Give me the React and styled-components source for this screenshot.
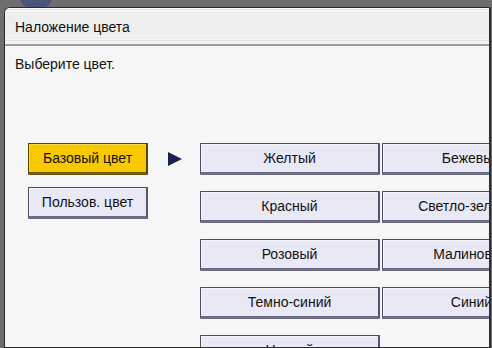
import React from 'react';
import styled, { createGlobalStyle } from 'styled-components';

const GlobalStyle = createGlobalStyle`
    html, body
    {
        margin: 0;
        padding: 0;
        background: #6b6b6b;
    }
    body
    {
        font-family: "Liberation Sans", Arial, sans-serif;
    }
`;

const Screen = styled.div
`   position: relative;
    width: 492px;
    height: 348px;
    overflow: hidden;
    background: #6d6d6d;
    display: flex;
    flex-direction: column;
    padding: 7px 0 0 4px;
    box-sizing: border-box;
`;

// the round dark-blue thing peeking out behind the panel
const Knob = styled.div
`   position: absolute;
    left: 18px;
    top: -26px;
    width: 36px;
    height: 36px;
    border-radius: 50%;
    background: #4a5478;
`;

const Panel = styled.section
`   position: relative;
    width: 487px;
    flex: 1;
    min-height: 0;
    display: flex;
    flex-direction: column;
    background: #f6f6f6;
    border: 1px solid #2a2a2a;
    border-right: 2px solid #2e2e2e;
    border-radius: 6px 0 0 0;
    overflow: hidden;
    box-sizing: border-box;
`;

const TitleBar = styled.header
`   flex: none;
    height: 38px;
    display: flex;
    align-items: center;
    padding: 2px 0 0 10px;
    box-sizing: border-box;
    font-size: 14px;
    color: #111;
    border-bottom: 2px solid #9c9c9c;
    background: linear-gradient(to bottom,
        #fbfbfb 0, #fbfbfb 1px,
        #e6e6e6 1px, #e6e6e6 2px,
        #f5f5f5 2px, #f5f5f5 4px,
        #e9e9e9 4px, #e9e9e9 5px,
        #eeeeee 5px, #eeeeee 28px,
        #f8f8f8 28px, #f8f8f8 29px,
        #e6e6e6 29px, #e6e6e6 30px,
        #f5f5f5 30px, #f5f5f5 32px,
        #e4e4e4 32px, #e4e4e4 33px,
        #f2f2f2 33px, #f2f2f2 36px);
`;

const Body = styled.div
`   flex: none;
    padding: 10px 0 0 10px;
    display: flex;
    flex-direction: column;
`;

const Hint = styled.p
`   margin: 0;
    font-size: 14px;
    line-height: 16px;
    color: #111;
`;

const Content = styled.div
`   display: flex;
    align-items: flex-start;
    margin-top: 71px;
    padding-left: 13px;
`;

const Modes = styled.div
`   display: flex;
    flex-direction: column;
    gap: 12px;
`;

const Button = styled.button
`   box-sizing: border-box;
    width: ${p => p.$w}px;
    height: 32px;
    flex: none;
    padding: 0 0 1px;
    font-family: "Liberation Sans", Arial, sans-serif;
    font-size: 14px;
    color: #111;
    text-align: center;
    white-space: nowrap;
    background: ${p => p.$active ? '#f8c800' : '#e9e9f6'};
    border: 1px solid ${p => p.$active ? '#5a4600' : '#4a4a66'};
    border-right: 2px solid ${p => p.$active ? '#5a4600' : '#55556e'};
    border-bottom: 3px solid ${p => p.$active ? '#6e5a10' : '#6c6c82'};
    border-radius: 1px;
    box-shadow: inset 1px 1px 0 ${p => p.$active ? '#fbd84a' : '#f6f6fc'};
`;

const Arrow = styled.div
`   flex: none;
    width: 0;
    height: 0;
    margin: 9px 18px 0 20px;
    border-top: 7.5px solid transparent;
    border-bottom: 7.5px solid transparent;
    border-left: 14px solid #1c2250;
`;

const Colors = styled.div
`   display: grid;
    grid-template-columns: 180px 180px;
    column-gap: 2px;
    row-gap: 16px;
    flex: none;
`;

const colours = [
    'Желтый', 'Бежевый',
    'Красный', 'Светло-зеленый',
    'Розовый', 'Малиновый',
    'Темно-синий', 'Синий',
    'Ночной',
];

const App = () =>
{
    return (
        <Screen>
            <GlobalStyle />
            <Knob />
            <Panel>
                <TitleBar>Наложение цвета</TitleBar>
                <Body>
                    <Hint>Выберите цвет.</Hint>
                    <Content>
                        <Modes>
                            <Button $w={120} $active>Базовый цвет</Button>
                            <Button $w={120}>Пользов. цвет</Button>
                        </Modes>
                        <Arrow />
                        <Colors>
                            {colours.map(c => <Button key={c} $w={180}>{c}</Button>)}
                        </Colors>
                    </Content>
                </Body>
            </Panel>
        </Screen>
    );
}

export default App;
